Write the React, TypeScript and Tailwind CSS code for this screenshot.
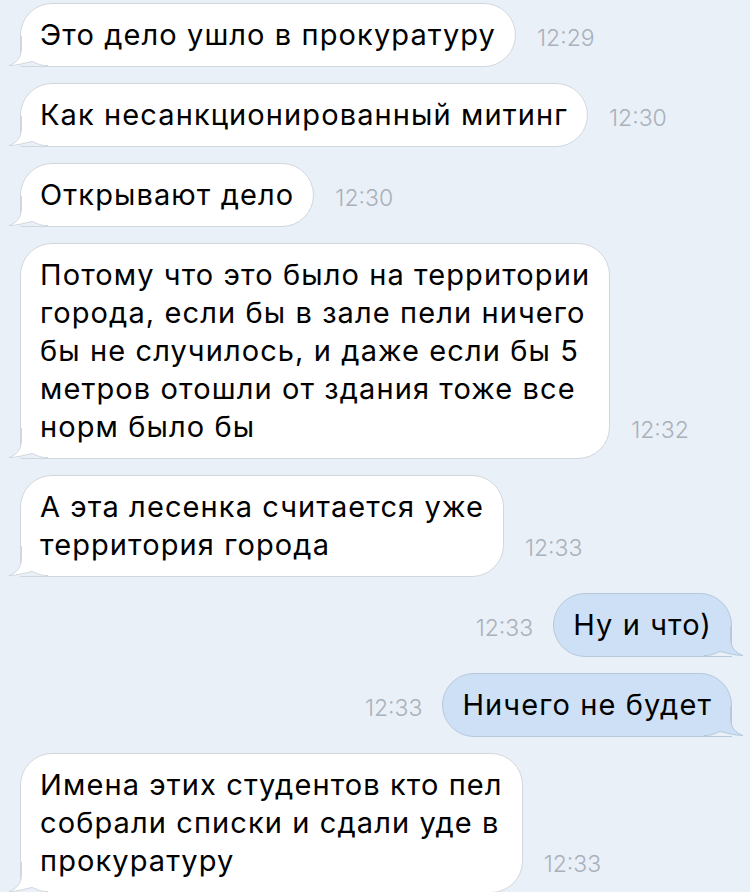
import React from "react";

type Msg = {
  lines: string[];
  time: string;
  out?: boolean;
};

const messages: Msg[] = [
  { lines: ["Это дело ушло в прокуратуру"], time: "12:29" },
  { lines: ["Как несанкционированный митинг"], time: "12:30" },
  { lines: ["Открывают дело"], time: "12:30" },
  {
    lines: [
      "Потому что это было на территории",
      "города, если бы в зале пели ничего",
      "бы не случилось, и даже если бы 5",
      "метров отошли от здания тоже все",
      "норм было бы",
    ],
    time: "12:32",
  },
  { lines: ["А эта лесенка считается уже", "территория города"], time: "12:33" },
  { lines: ["Ну и что)"], time: "12:33", out: true },
  { lines: ["Ничего не будет"], time: "12:33", out: true },
  {
    lines: ["Имена этих студентов кто пел", "собрали списки и сдали уде в", "прокуратуру"],
    time: "12:33",
  },
];

const BG = "#eaf0f7";

// tail drawn over the bottom corner of the bubble
function Tail({ fill, stroke, out }: { fill: string; stroke: string; out?: boolean }) {
  const curve =
    "M13.5,0 L13.5,12 C13.5,22 8,27 1,29.5 C10,29.5 18,26.5 24,25.5 C28,26.5 31,29.5 38,29.5 L40,29.5";
  return (
    <svg
      width="40"
      height="30"
      viewBox="0 0 40 30"
      className={`absolute bottom-0 ${out ? "right-[-13px] -scale-x-100" : "left-[-13px]"}`}
    >
      <path d={`${curve} L40,0 Z`} fill={fill} />
      <path
        d="M1,29.5 C10,29.5 18,26.5 24,25.5 C28,26.5 31,29.5 38,29.5 L40,29.5 L40,30 L0,30 Z"
        fill={BG}
      />
      <path d={curve} fill="none" stroke={stroke} strokeWidth="1" />
    </svg>
  );
}

function Bubble({ msg }: { msg: Msg }) {
  const time = (
    <span className="text-[23px] leading-[22px] font-light text-[#a9b1bb] pb-[18px] whitespace-nowrap">
      {msg.time}
    </span>
  );
  const fill = msg.out ? "#cde0f6" : "#ffffff";
  const stroke = msg.out ? "#b6c8dc" : "#d2d7de";
  return (
    <div className={`flex items-end ${msg.out ? "justify-end pr-[18px] gap-5" : "pl-5 gap-[21px]"}`}>
      {msg.out && time}
      <div
        className={`relative border px-[19px] py-3 text-[29px] leading-[38px] tracking-[1.1px] text-black whitespace-nowrap rounded-[32px] ${
          msg.out
            ? "bg-[#cde0f6] border-[#b6c8dc] rounded-br-none"
            : "bg-white border-[#d2d7de] rounded-bl-none"
        }`}
      >
        <Tail fill={fill} stroke={stroke} out={msg.out} />
        <div className="relative">
          {msg.lines.map((l, i) => (
            <div key={i}>{l}</div>
          ))}
        </div>
      </div>
      {!msg.out && time}
    </div>
  );
}

export default function App() {
  return (
    <div
      className="w-[750px] h-[892px] overflow-hidden bg-[#eaf0f7] pt-[3px] flex flex-col gap-4"
      style={{ fontFamily: "Inter, 'Noto Sans', sans-serif" }}
    >
      {messages.map((m, i) => (
        <Bubble key={i} msg={m} />
      ))}
    </div>
  );
}
